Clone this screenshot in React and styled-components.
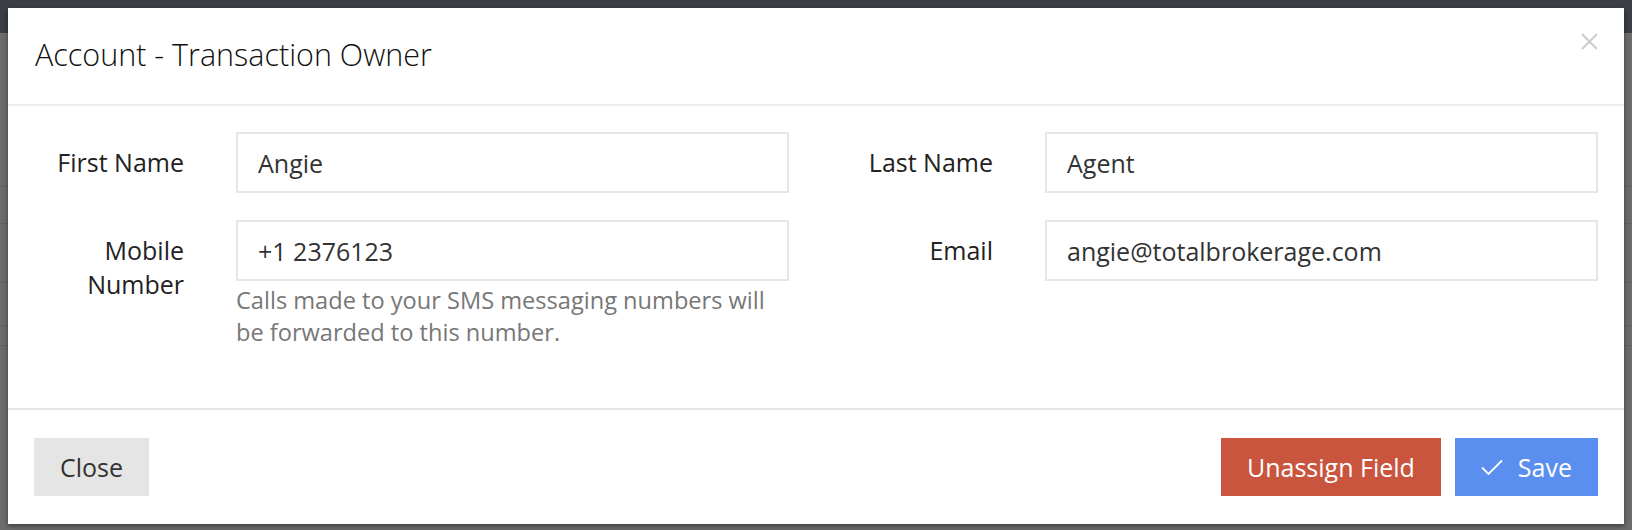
import React from 'react';
import styled, { createGlobalStyle } from 'styled-components';

const GlobalStyle = createGlobalStyle`
  html, body {
    margin: 0;
    padding: 0;
  }
  body {
    font-family: "Open Sans", "Liberation Sans", sans-serif;
    color: #222;
  }
`;

const Backdrop = styled.div`
  width: 1632px;
  height: 530px;
  box-sizing: border-box;
  padding: 8px;
  background:
    linear-gradient(#3b3e43, #3b3e43) top / 100% 33px no-repeat,
    linear-gradient(#626262, #626262) 0 186px / 100% 1px no-repeat,
    linear-gradient(#626262, #626262) 0 223px / 100% 1px no-repeat,
    linear-gradient(#626262, #626262) 0 282px / 100% 1px no-repeat,
    linear-gradient(#626262, #626262) 0 325px / 100% 1px no-repeat,
    linear-gradient(#626262, #626262) 0 345px / 100% 1px no-repeat,
    #6c6c6c;
`;

const Modal = styled.div`
  background: #fff;
  height: 516px;
  display: flex;
  flex-direction: column;
  box-shadow: 0 2px 5px rgba(0, 0, 0, 0.45);
`;

const Header = styled.div`
  display: flex;
  justify-content: space-between;
  align-items: flex-start;
  height: 98px;
  box-sizing: border-box;
  padding: 26px 26px 0 27px;
  border-bottom: 2px solid #eeeeee;
`;

const Title = styled.h4`
  margin: 0;
  font-size: 30.5px;
  line-height: 40px;
  font-weight: 300;
  color: #111;
`;

const CloseIcon = styled.button`
  border: none;
  background: none;
  padding: 0;
  margin-top: -1px;
  width: 17px;
  height: 17px;
  display: flex;
  cursor: pointer;
`;

const Body = styled.div`
  padding: 26px 26px 60px;
  display: grid;
  grid-template-columns: 1fr 1fr;
  column-gap: 54px;
  row-gap: 27px;
  align-items: start;
`;

const Field = styled.div`
  display: flex;
  gap: 52px;
`;

const Label = styled.label`
  width: 150px;
  flex: none;
  text-align: right;
  font-size: 25px;
  line-height: 34px;
  padding-top: 13px;
  color: #222;
`;

const Control = styled.div`
  flex: 1;
  min-width: 0;
`;

const Input = styled.input`
  width: 100%;
  height: 61px;
  box-sizing: border-box;
  border: 2px solid #e6e6e6;
  padding: 0 20px;
  font-family: "Open Sans", "Liberation Sans", sans-serif;
  font-size: 25px;
  color: #333;
  outline: none;
  background: #fff;
`;

const Help = styled.p`
  margin: 3px 0 0;
  font-size: 23.6px;
  line-height: 32px;
  color: #777;
`;

const Footer = styled.div`
  border-top: 2px solid #e6e6e6;
  padding: 28px 26px;
  display: flex;
  justify-content: space-between;
  align-items: center;
`;

const Actions = styled.div`
  display: flex;
  gap: 14px;
`;

const Button = styled.button`
  height: 58px;
  padding: 0 26px;
  border: none;
  display: flex;
  align-items: center;
  gap: 15px;
  font-family: "Open Sans", "Liberation Sans", sans-serif;
  font-size: 25px;
  background: ${p => p.bg || '#e5e5e5'};
  color: ${p => p.fg || '#333'};
  cursor: pointer;
`;

const Check = () => (
  <svg width="22" height="16" viewBox="0 0 22 16" fill="none">
    <path d="M1 8.5 L7.5 15 L21 1.5" stroke="#fff" strokeWidth="1.8" />
  </svg>
);

const X = () => (
  <svg width="17" height="17" viewBox="0 0 17 17">
    <path d="M1 1 L16 16 M16 1 L1 16" stroke="#cfcfcf" strokeWidth="2.2" />
  </svg>
);

const FormField = ({ label, value, help }) => (
  <Field>
    <Label>{label}</Label>
    <Control>
      <Input defaultValue={value} readOnly />
      {help && <Help>{help}</Help>}
    </Control>
  </Field>
);

const App = () => (
  <>
    <GlobalStyle />
    <Backdrop>
      <Modal>
        <Header>
          <Title>Account - Transaction Owner</Title>
          <CloseIcon aria-label="Close">
            <X />
          </CloseIcon>
        </Header>
        <Body>
          <FormField label="First Name" value="Angie" />
          <FormField label="Last Name" value="Agent" />
          <FormField
            label="Mobile Number"
            value="+1 2376123"
            help="Calls made to your SMS messaging numbers will be forwarded to this number."
          />
          <FormField label="Email" value="angie@totalbrokerage.com" />
        </Body>
        <Footer>
          <Button>Close</Button>
          <Actions>
            <Button bg="#c9553f" fg="#fff">Unassign Field</Button>
            <Button bg="#5a8fef" fg="#fff">
              <Check />
              Save
            </Button>
          </Actions>
        </Footer>
      </Modal>
    </Backdrop>
  </>
);

export default App;
